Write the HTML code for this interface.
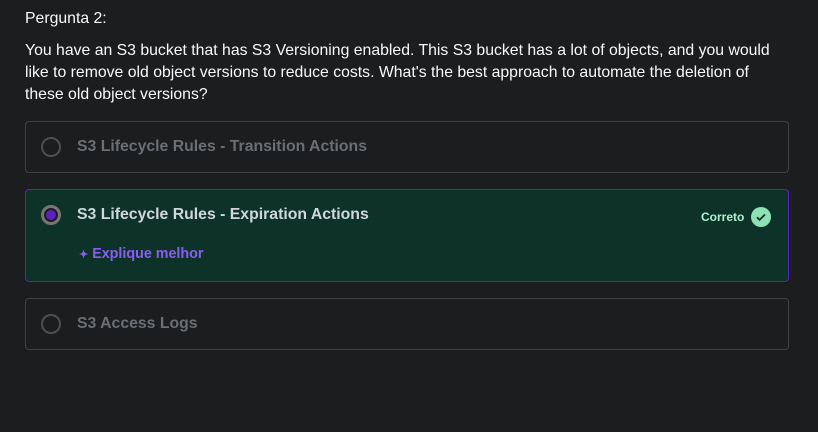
<!DOCTYPE html>
<html><head><style>
body{margin:0;width:818px;height:432px;background:#1c1d1f;font-family:"Liberation Sans",sans-serif;color:#f7f9fa;overflow:hidden}
.t{position:absolute;left:25px;font-size:15.8px;white-space:nowrap}
.card{position:absolute;left:25px;width:764px;border:1px solid #3e4143;border-radius:4px;box-sizing:border-box}
.r{position:absolute;left:15px;width:20px;height:20px;border:2px solid #4d4f4a;border-radius:50%;box-sizing:border-box}
.lab{position:absolute;left:51px;font-size:15.8px;font-weight:bold;color:#6a6f73}
</style></head><body>
<div class="t" style="top:10px">Pergunta 2:</div>
<div class="t" style="top:40px;line-height:22px">You have an S3 bucket that has S3 Versioning enabled. This S3 bucket has a lot of objects, and you would<br>like to remove old object versions to reduce costs. What's the best approach to automate the deletion of<br>these old object versions?</div>

<div class="card" style="top:121px;height:52px">
 <div class="r" style="top:15px"></div>
 <div class="lab" style="top:16px">S3 Lifecycle Rules - Transition Actions</div>
</div>

<div class="card" style="top:189px;height:93px;background:#0d3328;border-color:#5624c4">
 <div class="r" style="top:15px;border:3px solid #7a7475;background:#5a22c0;box-shadow:inset 0 0 0 2px #1c1d1f"></div>
 <div class="lab" style="top:16px;color:#d1d7dc">S3 Lifecycle Rules - Expiration Actions</div>
 <div style="position:absolute;left:675px;top:20px;font-size:12px;font-weight:bold;color:#acf2d0">Correto</div>
 <div style="position:absolute;left:725px;top:17px;width:20px;height:20px;border-radius:50%;background:#8ee1b5">
  <svg width="20" height="20" viewBox="0 0 20 20"><path d="M6 10.3l2.6 2.6L14 7.5" fill="none" stroke="#0d3328" stroke-width="1.8"/></svg>
 </div>
 <div style="position:absolute;left:53px;top:56px;font-size:14.3px;font-weight:bold;color:#8b5cf0">
  <span style="font-size:11px">✦</span> Explique melhor</div>
</div>

<div class="card" style="top:298px;height:52px">
 <div class="r" style="top:15px"></div>
 <div class="lab" style="top:16px">S3 Access Logs</div>
</div>
</body></html>
